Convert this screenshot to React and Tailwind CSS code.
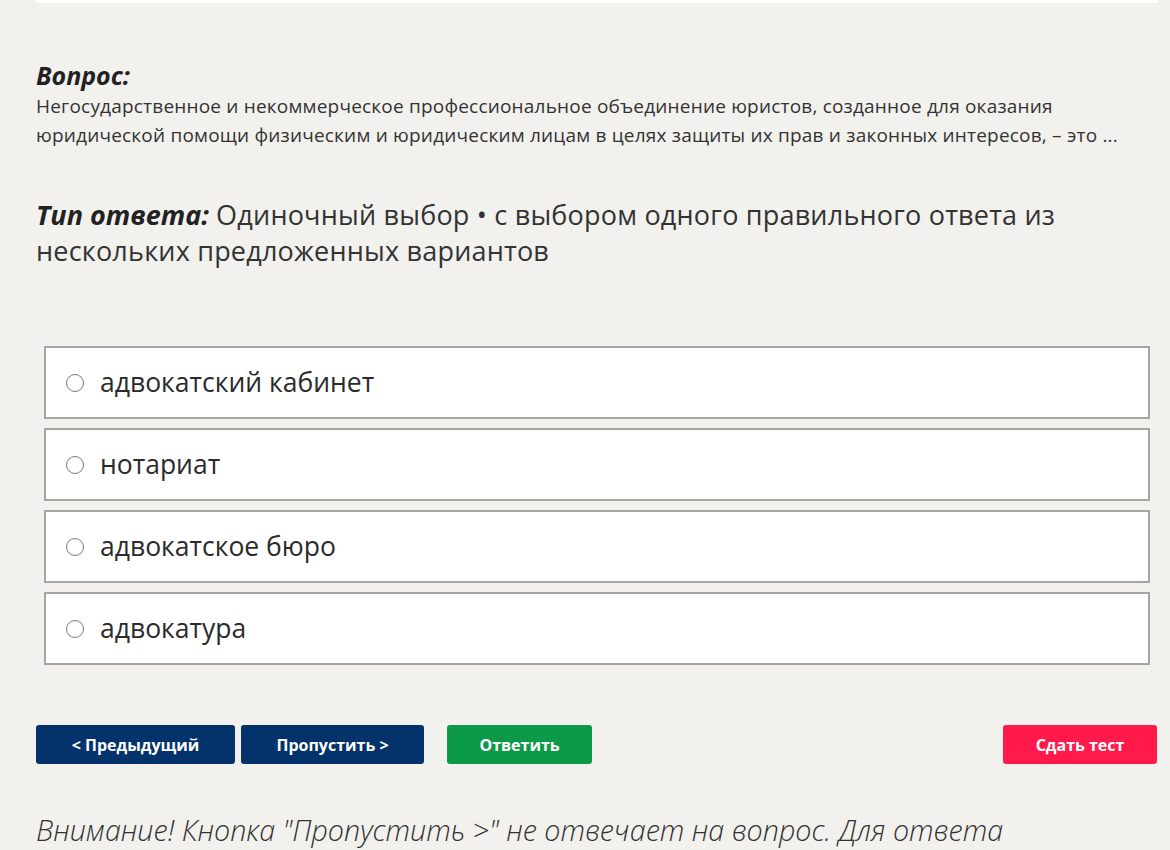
export default function App() {
  const answers = ["адвокатский кабинет", "нотариат", "адвокатское бюро", "адвокатура"];
  return (
    <div className="min-h-[850px] w-[1170px] overflow-hidden bg-[#f2f1ee] text-[#2b2b2b]" style={{ fontFamily: '"Open Sans", "Noto Sans", sans-serif' }}>
      <div className="ml-[36px] mr-[12px] h-[3px] bg-[#fffffb]" />
      <div className="px-[36px] pt-[56px]">
        <div className="text-[25px] font-bold italic leading-[32px] text-[#222]">Вопрос:</div>
        <p className="mt-[1px] text-[19px] leading-[29px] tracking-[0.2px] text-[#333]">
          Негосударственное и некоммерческое профессиональное объединение юристов, созданное для оказания юридической помощи физическим и юридическим лицам в целях защиты их прав и законных интересов, – это ...
        </p>
        <p className="mt-[47px] pr-[60px] text-[27px] leading-[36px] tracking-[0.2px] text-[#333]">
          <span className="font-bold italic tracking-normal text-[#222]">Тип ответа:</span> Одиночный выбор • с выбором одного правильного ответа из нескольких предложенных вариантов
        </p>
      </div>
      <div className="mt-[77px] flex flex-col gap-[9px] pl-[44px] pr-[20px]">
        {answers.map((a) => (
          <label key={a} className="flex h-[73px] items-center border-2 border-[#a5a5a5] bg-white pl-[20px]">
            <span className="h-[18px] w-[18px] rounded-full border-[1.5px] border-[#7a7a7a] bg-white" />
            <span className="ml-[16px] text-[26.5px] text-[#2b2b2b]">{a}</span>
          </label>
        ))}
      </div>
      <div className="mt-[60px] flex items-center px-[36px]">
        <button className="h-[39px] w-[199px] rounded-[3px] bg-[#04326a] text-[16px] font-bold text-white">&lt; Предыдущий</button>
        <button className="ml-[6px] h-[39px] w-[183px] rounded-[3px] bg-[#04326a] text-[16px] font-bold text-white">Пропустить &gt;</button>
        <button className="ml-[23px] h-[39px] w-[145px] rounded-[3px] bg-[#0c9a48] text-[16px] font-bold text-white">Ответить</button>
        <div className="flex-1" />
        <button className="mr-[-23px] h-[39px] w-[154px] rounded-[3px] bg-[#ff1a4b] text-[16px] font-bold text-white">Сдать тест</button>
      </div>
      <p className="mt-[48px] max-w-[1100px] px-[36px] text-[28.7px] font-light italic leading-[36px] text-[#333]">
        Внимание! Кнопка "Пропустить &gt;" не отвечает на вопрос. Для ответа нажмите кнопку "Ответить".
      </p>
    </div>
  );
}
